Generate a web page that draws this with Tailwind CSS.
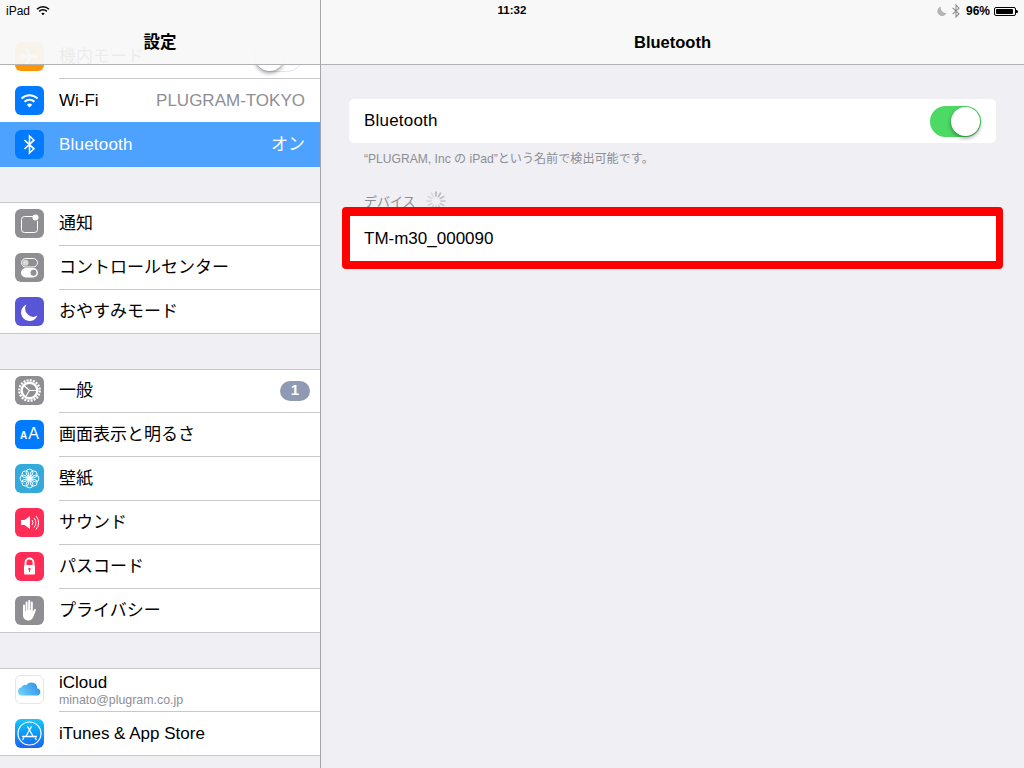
<!DOCTYPE html>
<html lang="ja">
<head>
    <meta charset="UTF-8">
    <title>Bluetooth</title>
    <script src="https://cdn.jsdelivr.net/npm/@tailwindcss/browser@4"></script>
</head>
<body class="bg-[#efeff4]">
<div class="relative flex h-[768px] w-[1024px] overflow-hidden bg-[#efeff4] font-['Liberation_Sans','Noto_Sans_CJK_JP',sans-serif] text-[17px] text-black">

    <!-- status bar -->
    <div class="absolute left-0 top-0 z-30 flex h-[21px] w-[1024px] items-center justify-between pt-px text-[12px]">
        <div class="flex w-[300px] items-center pl-[6px]">
            <span>iPad</span>
            <svg class="ml-[6px] -mt-[2px]" width="14" height="11" viewBox="0 0 14 11" fill="none" stroke="#000" stroke-width="1.5"><path d="M1 4.2a8.5 8.5 0 0 1 12 0"/><path d="M3.2 6.4a5.4 5.4 0 0 1 7.6 0"/><path d="M7 10.2 5.3 8.5a2.4 2.4 0 0 1 3.4 0z" fill="#000" stroke="none"/></svg>
        </div>
        <span class="text-[11.5px] font-bold">11:32</span>
        <div class="flex w-[300px] items-center justify-end pr-[6px]">
            <svg width="10" height="10" viewBox="0 0 10 10"><path d="M4 .5a4.8 4.8 0 1 0 5.600 6.400A5 5 0 0 1 4 .5z" fill="#b4b4b4"/></svg>
            <svg class="ml-[5px] -mt-px" width="8" height="14" viewBox="0 0 8 14" fill="none" stroke="#8e8e8e" stroke-width="1.100"><path d="M.6 3.800 7 9.800 4 13V1l3 3.200L.6 10.200"/></svg>
            <span class="ml-[6px] font-bold">96%</span>
            <div class="ml-[4px] h-[9px] w-[22px] rounded-[2px] border border-black p-px"><div class="h-full w-[96%] rounded-[1px] bg-black"></div></div>
            <div class="h-[3px] w-[2px] rounded-r-sm bg-black"></div>
        </div>
    </div>

    <!-- master list -->
    <aside class="relative h-full w-[321px] shrink-0 overflow-hidden border-r border-[#a5a5aa] pt-[35px]">
        <div class="absolute left-0 top-0 z-20 flex h-[65px] w-[320px] items-center justify-center border-b border-[#b2b2b2] bg-[#f8f8f8]/95 pt-[21px] text-[16.5px] font-bold">設定</div>

        <div class="mb-[35px] bg-white">
            <div class="flex h-[44px] pl-[15px]">
                <div class="mt-[7px] h-[29px] w-[29px] rounded-[6px] bg-[#ff9500]">
                    <svg width="29" height="29" viewBox="0 0 29 29"><path d="M23 14.500c0-1-1-1.600-2-1.600h-4.300L12 6h-1.800l2.400 6.900H8.400L7 11H5.500l.8 3.500-.8 3.500H7l1.400-1.900h4.200L10.200 23H12l4.700-6.900H21c1 0 2-.6 2-1.600z" fill="#fff"/></svg>
                </div>
                <div class="ml-[15px] flex h-full flex-1 items-center justify-between border-b border-[#c8c7cc] pr-[17px]">
                    <span>機内モード</span>
                    <div class="h-[31px] w-[49px] rounded-full border border-[#e5e5ea] bg-white"><div class="h-[29px] w-[29px] rounded-full bg-white shadow-[0_2px_4px_rgba(0,0,0,0.4)]"></div></div>
                </div>
            </div>
            <div class="flex h-[44px] pl-[15px]">
                <div class="mt-[7px] h-[29px] w-[29px] rounded-[6px] bg-[#007aff]">
                    <svg width="29" height="29" viewBox="0 0 29 29" fill="none" stroke="#fff" stroke-width="2"><path d="M6.500 12.500a11.500 11.500 0 0 1 16 0"/><path d="M9.500 15.800a7.200 7.200 0 0 1 10 0"/><path d="M14.500 21.500 11.800 18.800a3.800 3.800 0 0 1 5.400 0z" fill="#fff" stroke="none"/></svg>
                </div>
                <div class="ml-[15px] flex h-full flex-1 items-center justify-between border-b border-[#c8c7cc] pr-[15px]">
                    <span>Wi-Fi</span><span class="text-[#8e8e93]">PLUGRAM-TOKYO</span>
                </div>
            </div>
            <div class="relative -mt-px flex h-[45px] bg-[#4da2ff] pl-[15px] text-white">
                <div class="mt-[8px] h-[29px] w-[29px] rounded-[6px] bg-[#007aff]">
                    <svg width="29" height="29" viewBox="0 0 29 29" fill="none" stroke="#fff" stroke-width="1.600"><path d="M9.500 10 19 18.800 14.500 23V6l4.500 4.200L9.500 19"/></svg>
                </div>
                <div class="ml-[15px] flex h-full flex-1 items-center justify-between pr-[15px]">
                    <span class="tracking-[0.2px]">Bluetooth</span><span>オン</span>
                </div>
            </div>
        </div>

        <div class="mb-[35px] border-b border-[#c8c7cc] bg-white shadow-[inset_0_1px_0_#c8c7cc]">
            <div class="flex h-[44px] pl-[15px]">
                <div class="mt-[7px] h-[29px] w-[29px] rounded-[6px] bg-[#8e8e93]">
                    <svg width="29" height="29" viewBox="0 0 29 29" fill="none"><path d="M18 7.500H9.500a3 3 0 0 0-3 3v10a3 3 0 0 0 3 3h10a3 3 0 0 0 3-3V12" stroke="#fff" stroke-width="1"/><circle cx="20.500" cy="8.500" r="3" fill="#fff"/></svg>
                </div>
                <div class="ml-[15px] flex h-full flex-1 items-center border-b border-[#c8c7cc]">通知</div>
            </div>
            <div class="flex h-[44px] pl-[15px]">
                <div class="mt-[7px] h-[29px] w-[29px] rounded-[6px] bg-[#8e8e93]">
                    <svg width="29" height="29" viewBox="0 0 29 29" fill="none"><rect x="6.500" y="5.500" width="16" height="8.500" rx="4.250" stroke="#fff"/><circle cx="10.500" cy="9.750" r="3" fill="#d9d9db"/><rect x="6" y="15" width="17" height="9.500" rx="4.750" fill="#fff"/><circle cx="18.500" cy="19.750" r="3" fill="#8e8e93"/></svg>
                </div>
                <div class="ml-[15px] flex h-full flex-1 items-center border-b border-[#c8c7cc]">コントロールセンター</div>
            </div>
            <div class="flex h-[43px] pl-[15px]">
                <div class="mt-[7px] h-[29px] w-[29px] rounded-[6px] bg-[#5856d6]">
                    <svg width="29" height="29" viewBox="0 0 29 29"><path d="M11.500 7.500a8.500 8.500 0 1 0 11 11A8 8 0 0 1 11.500 7.500z" fill="#fff"/></svg>
                </div>
                <div class="ml-[15px] flex h-full flex-1 items-center">おやすみモード</div>
            </div>
        </div>

        <div class="mb-[35px] border-b border-[#c8c7cc] bg-white shadow-[inset_0_1px_0_#c8c7cc]">
            <div class="flex h-[44px] pl-[15px]">
                <div class="mt-[7px] h-[29px] w-[29px] rounded-[6px] bg-[#8e8e93]">
                    <svg width="29" height="29" viewBox="0 0 29 29" fill="none" stroke="#fff"><circle cx="14.500" cy="14.500" r="10.200" stroke-width="2.400" stroke-dasharray="2 1.200"/><circle cx="14.500" cy="14.500" r="7.800" stroke-width="2.400"/><path d="M14.500 14.500 9 9.500M14.500 14.500H22M14.500 14.500 10.500 21" stroke-width="1.100"/></svg>
                </div>
                <div class="ml-[15px] flex h-full flex-1 items-center justify-between border-b border-[#c8c7cc] pr-[10px]">
                    <span>一般</span>
                    <span class="flex h-[20px] w-[30px] items-center justify-center rounded-full bg-[#8e9ab3] text-[15px] font-bold text-white">1</span>
                </div>
            </div>
            <div class="flex h-[44px] pl-[15px]">
                <div class="flex mt-[7px] h-[29px] w-[29px] items-baseline justify-center rounded-[6px] bg-[#007aff] pt-[6px] leading-none text-white">
                    <span class="text-[10px] font-bold">A</span><span class="ml-px text-[16px]">A</span>
                </div>
                <div class="ml-[15px] flex h-full flex-1 items-center border-b border-[#c8c7cc]">画面表示と明るさ</div>
            </div>
            <div class="flex h-[44px] pl-[15px]">
                <div class="mt-[7px] h-[29px] w-[29px] rounded-[6px] bg-[#34aadc]">
                    <svg width="29" height="29" viewBox="0 0 29 29" fill="none" stroke="#fff" stroke-width="1"><circle cx="14.500" cy="8.500" r="3.400"/><circle cx="14.500" cy="20.500" r="3.400"/><circle cx="8.500" cy="14.500" r="3.400"/><circle cx="20.500" cy="14.500" r="3.400"/><circle cx="10.300" cy="10.300" r="3.400"/><circle cx="18.700" cy="10.300" r="3.400"/><circle cx="10.300" cy="18.700" r="3.400"/><circle cx="18.700" cy="18.700" r="3.400"/><circle cx="14.500" cy="14.500" r="2" fill="#fff"/></svg>
                </div>
                <div class="ml-[15px] flex h-full flex-1 items-center border-b border-[#c8c7cc]">壁紙</div>
            </div>
            <div class="flex h-[44px] pl-[15px]">
                <div class="mt-[7px] h-[29px] w-[29px] rounded-[6px] bg-[#ff2d55]">
                    <svg width="29" height="29" viewBox="0 0 29 29" fill="none" stroke="#fff"><path d="M6 12h3.500L15 8v13l-5.500-4H6z" fill="#fff" stroke="none"/><path d="M17 12a4 4 0 0 1 0 5M19 10a7 7 0 0 1 0 9.500M21 8a10 10 0 0 1 0 13.500" stroke-width="1"/></svg>
                </div>
                <div class="ml-[15px] flex h-full flex-1 items-center border-b border-[#c8c7cc]">サウンド</div>
            </div>
            <div class="flex h-[44px] pl-[15px]">
                <div class="mt-[7px] h-[29px] w-[29px] rounded-[6px] bg-[#ff2d55]">
                    <svg width="29" height="29" viewBox="0 0 29 29"><path d="M10.500 13v-2.500a4 4 0 0 1 8 0V13" fill="none" stroke="#fff" stroke-width="1.800"/><rect x="9" y="13" width="11" height="9.500" rx="1" fill="#fff"/><circle cx="14.500" cy="17" r="1.200" fill="#ff2d55"/><rect x="14" y="17" width="1" height="3" fill="#ff2d55"/></svg>
                </div>
                <div class="ml-[15px] flex h-full flex-1 items-center border-b border-[#c8c7cc]">パスコード</div>
            </div>
            <div class="flex h-[43px] pl-[15px]">
                <div class="mt-[7px] h-[29px] w-[29px] rounded-[6px] bg-[#8e8e93]">
                    <svg width="29" height="29" viewBox="0 0 29 29"><path d="M8 9.500a1 1 0 0 1 2 0V15h.6V6.500a1 1 0 0 1 2 0V14h.6V5a1 1 0 0 1 2 0v9h.6V6.500a1 1 0 0 1 2 0V16l1.200-2.500c.6-1.200 2.400-.5 1.900.8l-2.400 6.200c-.8 2.300-2.400 4-5 4-3.200 0-5.500-2.200-5.500-5.500z" fill="#fff"/></svg>
                </div>
                <div class="ml-[15px] flex h-full flex-1 items-center">プライバシー</div>
            </div>
        </div>

        <div class="border-b border-[#c8c7cc] bg-white shadow-[inset_0_1px_0_#c8c7cc]">
            <div class="flex h-[44px] pl-[15px]">
                <div class="mt-[7px] h-[29px] w-[29px] rounded-[6px] border border-[#e5e5ea] bg-white">
                    <svg class="-m-px" width="29" height="29" viewBox="0 0 29 29"><defs><linearGradient id="cloud" x1="0" y1="0.700" x2="1" y2="0.300"><stop offset="0" stop-color="#6fd0f5"/><stop offset="1" stop-color="#2f8ff0"/></linearGradient></defs><path d="M7 20.500a4 4 0 0 1-.8-7.900 4.500 4.500 0 0 1 5.300-2.700 6 6 0 0 1 10.800 3.600 3.600 3.600 0 0 1 .5 7z" fill="url(#cloud)"/></svg>
                </div>
                <div class="ml-[15px] flex h-full flex-1 flex-col justify-center border-b border-[#c8c7cc]">
                    <span class="leading-[20px]">iCloud</span>
                    <span class="text-[12.4px] leading-[14px] text-[#8e8e93]">minato@plugram.co.jp</span>
                </div>
            </div>
            <div class="flex h-[43px] pl-[15px]">
                <div class="mt-[7px] h-[29px] w-[29px] rounded-[6px] bg-gradient-to-b from-[#1ac8fc] to-[#1d62f0]">
                    <svg width="29" height="29" viewBox="0 0 29 29" fill="none" stroke="#fff"><circle cx="14.500" cy="14.500" r="11.500" stroke-width="1.200"/><path d="M12.500 7.500l6 10.500M16.500 7.500 10.500 18M7 17.500h15" stroke-width="1.300"/><path d="M7.500 21l1.500-2.500M21.500 21 20 18.500" stroke-width="1.300"/></svg>
                </div>
                <div class="ml-[15px] flex h-full flex-1 items-center">iTunes &amp; App Store</div>
            </div>
        </div>
    </aside>

    <!-- detail pane -->
    <main class="flex-1">
        <div class="flex h-[65px] items-center justify-center border-b border-[#b2b2b2] bg-[#f8f8f8] pt-[21px] text-[16.5px] font-bold">Bluetooth</div>

        <div class="ml-[28px] mt-[34px] flex h-[44px] w-[647px] items-center justify-between rounded-[5px] bg-white pl-[15px] pr-[15px]">
            <span class="tracking-[0.2px]">Bluetooth</span>
            <div class="flex h-[31px] w-[51px] justify-end rounded-full bg-[#4cd964] p-px"><div class="h-[29px] w-[29px] rounded-full bg-white shadow-[0_2px_4px_rgba(0,0,0,0.4)]"></div></div>
        </div>
        <div class="ml-[43px] flex h-[30px] items-center pt-[2px] text-[12.1px] text-[#8e8e93]">“PLUGRAM, Inc の iPad”という名前で検出可能です。</div>

        <div class="ml-[43px] flex h-[34px] items-center pt-[24px] text-[13px] text-[#8e8e93]">
            <span>デバイス</span>
            <svg class="ml-[9px] -mt-[3px] shrink-0" width="22" height="22" viewBox="0 0 22 22" stroke="#b5b5b5" stroke-width="1.600" stroke-linecap="round">
                <path d="M11 2v4"/><path d="M15.500 3.200l-2 3.500" opacity=".9"/><path d="M18.800 6.500l-3.500 2" opacity=".8"/><path d="M20 11h-4" opacity=".7"/><path d="M18.800 15.500l-3.500-2" opacity=".65"/><path d="M15.500 18.800l-2-3.500" opacity=".6"/><path d="M11 20v-4" opacity=".55"/><path d="M6.500 18.800l2-3.500" opacity=".5"/><path d="M3.200 15.500l3.500-2" opacity=".45"/><path d="M2 11h4" opacity=".4"/><path d="M3.200 6.500l3.500 2" opacity=".35"/><path d="M6.500 3.200l2 3.500" opacity=".3"/>
            </svg>
        </div>

        <div class="relative ml-[21px] flex h-[62px] w-[661px] items-center rounded-[4px] border-b-[8px] border-l-[8px] border-r-[7px] border-t-[9px] border-[#ff0000] bg-white pl-[14px]">TM-m30_000090</div>
    </main>
</div>
</body>
</html>
